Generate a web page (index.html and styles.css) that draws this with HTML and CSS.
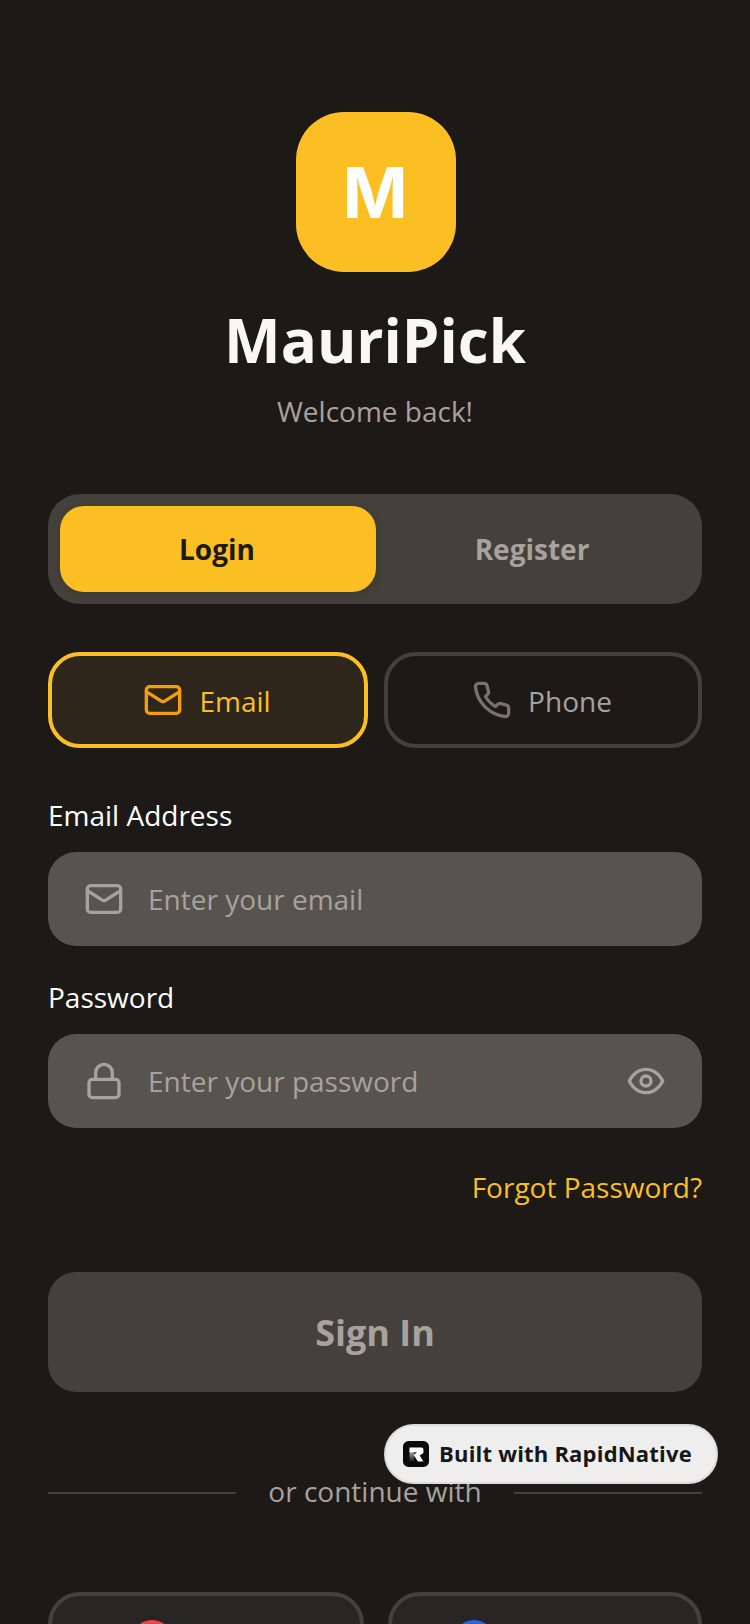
FILE: index.html
```html
<!DOCTYPE html>
<html lang="en">
<head>
  <meta charset="UTF-8">
  <meta name="viewport" content="width=device-width, initial-scale=1.0">
  <title>MauriPick</title>
  <link rel="stylesheet" href="styles.css">
</head>
<body>
  <main class="screen">
    <div class="brand">
      <div class="logo">M</div>
      <h1 class="title">MauriPick</h1>
      <p class="subtitle">Welcome back!</p>
    </div>

    <div class="segment">
      <button class="segment-btn active">Login</button>
      <button class="segment-btn">Register</button>
    </div>

    <div class="methods">
      <button class="method active">
        <svg class="icon icon-amber" viewBox="0 0 24 24"><rect x="2" y="4" width="20" height="16" rx="2"/><path d="m22 7-8.97 5.7a1.94 1.94 0 0 1-2.06 0L2 7"/></svg>
        <span class="method-label">Email</span>
      </button>
      <button class="method">
        <svg class="icon" viewBox="0 0 24 24"><path d="M22 16.92v3a2 2 0 0 1-2.18 2 19.79 19.79 0 0 1-8.63-3.07 19.5 19.5 0 0 1-6-6 19.79 19.79 0 0 1-3.07-8.67A2 2 0 0 1 4.11 2h3a2 2 0 0 1 2 1.72 12.84 12.84 0 0 0 .7 2.81 2 2 0 0 1-.45 2.11L8.09 9.91a16 16 0 0 0 6 6l1.27-1.27a2 2 0 0 1 2.11-.45 12.84 12.84 0 0 0 2.81.7A2 2 0 0 1 22 16.92z"/></svg>
        <span class="method-label">Phone</span>
      </button>
    </div>

    <label class="field-label">Email Address</label>
    <div class="field">
      <svg class="icon" viewBox="0 0 24 24"><rect x="2" y="4" width="20" height="16" rx="2"/><path d="m22 7-8.97 5.7a1.94 1.94 0 0 1-2.06 0L2 7"/></svg>
      <input class="field-input" type="text" placeholder="Enter your email">
    </div>

    <label class="field-label password-label">Password</label>
    <div class="field">
      <svg class="icon" viewBox="0 0 24 24"><rect x="3" y="11" width="18" height="11" rx="2"/><path d="M7 11V7a5 5 0 0 1 10 0v4"/></svg>
      <input class="field-input" type="password" placeholder="Enter your password">
      <svg class="icon" viewBox="0 0 24 24"><path d="M2 12s3-7 10-7 10 7 10 7-3 7-10 7-10-7-10-7Z"/><circle cx="12" cy="12" r="3"/></svg>
    </div>

    <a class="forgot">Forgot Password?</a>

    <button class="submit">Sign In</button>

    <div class="divider">
      <span class="divider-line"></span>
      <span class="divider-text">or continue with</span>
      <span class="divider-line"></span>
    </div>

    <div class="socials">
      <button class="social"><span class="social-dot dot-red"></span></button>
      <button class="social"><span class="social-dot dot-blue"></span></button>
    </div>
  </main>

  <div class="badge">
    <svg class="badge-logo" viewBox="0 0 28 28">
      <defs>
        <linearGradient id="stem" x1="0" y1="0" x2="0" y2="1">
          <stop offset="0" stop-color="#b0b0b0"/>
          <stop offset="1" stop-color="#1a1a1a"/>
        </linearGradient>
      </defs>
      <rect width="28" height="28" rx="6" fill="#0a0a0a"/>
      <rect x="7" y="11" width="5" height="11" fill="url(#stem)"/>
      <path d="M7 7h13a2 2 0 0 1 2 2v4l-4 2.500 4 6.500h-6l-4.500-7 3.500-3H7z" fill="#fff"/>
    </svg>
    <span class="badge-text">Built with RapidNative</span>
  </div>
</body>
</html>
```

FILE: styles.css
```css
* { box-sizing: border-box; }
html, body { margin: 0; height: 100%; }
body { background-color: #1c1917; font-family: "Open Sans", sans-serif; overflow: hidden; position: relative; }
button { font-family: inherit; border: none; padding: 0; }

.screen { display: flex; flex-direction: column; padding: 112px 48px 0; }

.brand { display: flex; flex-direction: column; align-items: center; }
.logo { width: 160px; height: 160px; margin-left: 2px; padding-right: 2px; border-radius: 48px; background-color: #fbbf24; color: #fff; font-family: Inter, sans-serif; font-size: 70px; font-weight: 700; display: flex; align-items: center; justify-content: center; }
.title { margin: 24px 0 0; font-size: 60px; line-height: 88px; font-weight: 700; color: #faf7f0; }
.subtitle { margin: 7px 0 0; font-size: 28px; line-height: 40px; color: #a8a29e; }

.segment { display: flex; margin-top: 63px; padding: 12px; height: 110px; border-radius: 32px; background-color: #44403c; }
.segment-btn { flex: 1; padding-right: 2px; border-radius: 24px; background: none; font-size: 28px; font-weight: 700; color: #a8a29e; }
.segment-btn.active { flex: none; width: 316px; background-color: #fbbf24; color: #1c1917; box-shadow: 0 2px 8px rgba(0, 0, 0, 0.12); }

.methods { display: flex; gap: 16px; margin-top: 48px; }
.method { flex: 1; height: 96px; padding-right: 2px; display: flex; align-items: center; justify-content: center; gap: 16px; border: 4px solid #44403c; border-radius: 32px; background: none; font-size: 28px; color: #a8a29e; }
.method.active { flex: none; width: 320px; border-color: #fbbf24; background-color: #2e261a; color: #fbbf24; }
.method-label { margin-top: 2px; }

.icon { width: 40px; height: 40px; flex: none; fill: none; stroke: #a8a29e; stroke-width: 2; stroke-linecap: round; stroke-linejoin: round; }
.method .icon { stroke: #78716c; }
.method.active .icon { stroke: #f59e0b; }

.field-label { margin-top: 47px; font-size: 28px; line-height: 40px; color: #fff; }
.password-label { margin-top: 31px; }
.field { display: flex; align-items: center; gap: 24px; height: 94px; margin-top: 17px; padding: 0 36px; border-radius: 28px; background-color: #57534e; }
.field-input { flex: 1; min-width: 0; border: none; outline: none; background: none; padding: 0; font-family: inherit; font-size: 28px; color: #fff; }
.field-input::placeholder { color: #a8a29e; opacity: 1; }

.forgot { align-self: flex-end; margin-top: 39px; font-size: 28px; line-height: 40px; color: #fbbf24; }

.submit { height: 120px; margin-top: 65px; border-radius: 28px; background-color: #44403c; font-size: 36px; font-weight: 700; color: #a8a29e; }

.divider { display: flex; align-items: center; margin-top: 79px; }
.divider-line { flex: 1; height: 2px; background-color: #44403c; }
.divider-text { padding: 0 32px; margin-bottom: 4px; font-size: 28px; line-height: 40px; color: #a8a29e; }

.socials { display: flex; gap: 24px; margin-top: 77px; }
.social { flex: 1; height: 110px; padding-top: 24px; display: flex; justify-content: center; align-items: flex-start; border: 4px solid #44403c; border-radius: 32px; background-color: #292524; }
.social:first-child { flex: none; width: 316px; }
.social-dot { width: 40px; height: 40px; border-radius: 50%; }
.dot-red { background-color: #ef4444; margin-right: 108px; }
.dot-blue { background-color: #2563eb; margin-right: 142px; }

.badge { position: absolute; top: 1424px; right: 32px; width: 334px; height: 60px; display: flex; align-items: center; gap: 10px; padding-left: 17px; border: 2px solid #dcdcdc; border-radius: 30px; background-color: #eeeeee; font-size: 22px; letter-spacing: 0.2px; font-weight: 700; color: #171717; }
.badge-logo { width: 26px; height: 26px; flex: none; }
.badge-text { margin-bottom: 2px; }
```
